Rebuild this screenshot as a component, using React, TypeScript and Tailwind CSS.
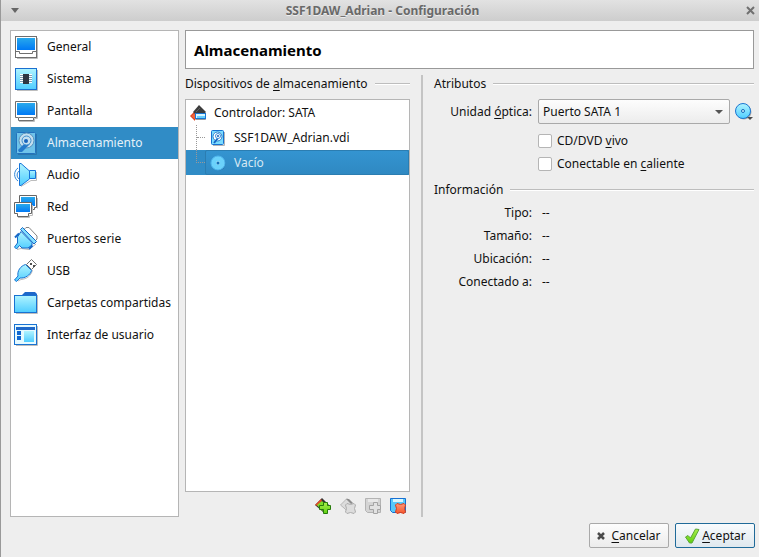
import type { ReactNode } from "react";

function Svg({ size = 24, children }: { size?: 16 | 18 | 24; children: ReactNode }) {
  return (
    <svg width={size} height={size} viewBox={`0 0 ${size} ${size}`} className="shrink-0" aria-hidden="true">
      {children}
    </svg>
  );
}

function Gradients() {
  return (
    <svg width="0" height="0" className="absolute" aria-hidden="true">
      <defs>
        <linearGradient id="screen" x1="0" y1="0" x2="0" y2="1">
          <stop offset="0" stopColor="#28a9ec" />
          <stop offset="1" stopColor="#0079f5" />
        </linearGradient>
        <linearGradient id="sky" x1="0" y1="0" x2="0" y2="1">
          <stop offset="0" stopColor="#b0f4ff" />
          <stop offset="1" stopColor="#4fcdff" />
        </linearGradient>
        <linearGradient id="green" x1="0" y1="0" x2="0" y2="1">
          <stop offset="0" stopColor="#a8ee4c" />
          <stop offset="1" stopColor="#5fd010" />
        </linearGradient>
        <linearGradient id="red" x1="0" y1="0" x2="0" y2="1">
          <stop offset="0" stopColor="#ff9a78" />
          <stop offset="1" stopColor="#f4552c" />
        </linearGradient>
      </defs>
    </svg>
  );
}

function GeneralIcon() {
  return (
    <Svg>
      <path d="M3 23.5H23.5V3" fill="none" stroke="#bdbdbd" />
      <rect x="1.5" y="1.5" width="21" height="21" fill="#fff" stroke="#6f6f6f" />
      <rect x="3" y="3" width="18" height="12" fill="url(#screen)" />
      <path d="M2 16.5H5.5V18.5H18.5V16.5H22" fill="none" stroke="#6f6f6f" />
    </Svg>
  );
}

function SystemIcon() {
  return (
    <Svg>
      <path d="M3 23.5H23.5V3" fill="none" stroke="#bdbdbd" />
      <rect x="1.5" y="1.5" width="21" height="21" fill="url(#sky)" stroke="#1b6fd0" />
      <path d="M6 7.5H18M6 9.5H18M6 11.5H18M6 13.5H18M6 15.5H18" stroke="#fff" />
      <path d="M6 8.5H18M6 10.5H18M6 12.5H18M6 14.5H18" stroke="#7d9db4" />
      <rect x="9" y="7" width="6" height="10" fill="#2f3542" />
    </Svg>
  );
}

function DisplayIcon() {
  return (
    <Svg>
      <path d="M5 22.5H20.5V19.5H23.5V4" fill="none" stroke="#bdbdbd" />
      <path d="M1.5 2.5H22.5V18.5H19.5V21.5H4.5V18.5H1.5Z" fill="#fff" stroke="#6f6f6f" />
      <rect x="3" y="4" width="18" height="12" fill="url(#screen)" />
      <path d="M5 18.5H19" stroke="#6f6f6f" />
    </Svg>
  );
}

function StorageIcon() {
  return (
    <Svg>
      <path d="M4 23.5H22.5V3" fill="none" stroke="#2a77ae" />
      <rect x="2.5" y="1.5" width="19" height="21" rx="1" fill="#6ec3ea" stroke="#2272bd" />
      <circle cx="12.5" cy="9.500" r="7.500" fill="#c4dfef" stroke="#5793bd" />
      <path d="M12 11L8 15L4 19L5 21H8L13 16L16 13Z" fill="#2379cb" />
      <circle cx="12.500" cy="9.500" r="4.500" fill="#c4dfef" stroke="#3f8dcb" />
      <circle cx="12" cy="10" r="2" fill="#1764bd" />
    </Svg>
  );
}

function AudioIcon() {
  return (
    <Svg>
      <path d="M7 23.5L17 17.5H22.5V9" fill="none" stroke="#bdbdbd" />
      <path d="M5.5 0.5H7L15.5 8V16L7 22.5H5.5Z" fill="url(#sky)" stroke="#1674d8" />
      <path d="M15.5 7.5H21.5V15.5H15.5Z" fill="url(#sky)" stroke="#1674d8" />
      <path d="M4 5C-0.5 8 -0.5 15 4 18M5 8C2.5 10 2.5 14 5 16" fill="none" stroke="#2d86d8" />
    </Svg>
  );
}

function NetworkIcon() {
  return (
    <Svg>
      <path d="M5.5 0.5H22.5V12.5H20.5V14.5H8.5V12.5H5.5Z" fill="#fff" stroke="#666" />
      <rect x="7" y="2" width="14" height="9" fill="url(#screen)" />
      <path d="M4 22.5H15.5V20.5H18.5V10M23.5 3V13.5" fill="none" stroke="#bdbdbd" />
      <path d="M0.5 7.5H17.5V18.5H14.5V21.5H3.5V18.5H0.5Z" fill="#fff" stroke="#666" />
      <rect x="2" y="9" width="14" height="8" fill="url(#screen)" />
    </Svg>
  );
}

function SerialIcon() {
  return (
    <Svg>
      <path d="M10 2.5L12 0.5H15L23 9V12L20 15Z" fill="#fff" stroke="#858585" />
      <path d="M3 22.5L7 21.5L15 22.5L22 17" fill="none" stroke="#b5b5b5" />
      <path d="M7 4.500L18 15.500V18L14 21H8L5.500 18.500L2.500 22L0.500 20L3.500 16V10Z" fill="url(#sky)" stroke="#1769c8" />
      <path d="M6.5 2.5L8.5 0.5L22.5 14.5L20 17Z" fill="#85dfff" stroke="#1769c8" />
      <path d="M1 10.5L5 6.500M15 22L18.5 18.5" stroke="#1769c8" strokeWidth="2" />
    </Svg>
  );
}

function UsbIcon() {
  return (
    <Svg>
      <path d="M12.5 5.5L17.5 0.5L22.5 5.5L17.5 10.5Z" fill="#fff" stroke="#707070" />
      <path d="M16 4H18V6H16ZM19 6H21V8H19Z" fill="#4f4f4f" />
      <path d="M4 22L7 20.5C13 20 17 17 18.5 11" fill="none" stroke="#bdbdbd" />
      <path d="M11.5 5.5L17.5 11.5C16.5 16 11 19.5 6 19L2.5 22.5L0.5 21L4 17C3 12 6.5 7 11.5 5.5Z" fill="url(#sky)" stroke="#1872d2" />
    </Svg>
  );
}

function FolderIcon() {
  return (
    <Svg>
      <path d="M8 5V4L11 1H21L23 3V6H8Z" fill="#1e68c9" />
      <path d="M2 22.5H23.5V4" fill="none" stroke="#bdbdbd" />
      <rect x="0.5" y="4.5" width="22" height="17" fill="url(#sky)" stroke="#1872d2" />
    </Svg>
  );
}

function InterfaceIcon() {
  return (
    <Svg>
      <path d="M2 22.5H23.5V3" fill="none" stroke="#bdbdbd" />
      <rect x="0.5" y="1.5" width="22" height="20" fill="#e5faff" stroke="#1872d2" />
      <rect x="2" y="4" width="19" height="3" fill="#1e68c9" />
      <path d="M3 8H7V12H3ZM3 13H7V17H3Z" fill="#0e67d2" />
      <rect x="10" y="8" width="10" height="11" fill="url(#sky)" />
    </Svg>
  );
}

function ControllerIcon() {
  return (
    <Svg size={16}>
      <path d="M0 11L5 6V16Z" fill="#d9401f" />
      <path d="M1 11L6 7V15Z" fill="#f0643c" />
      <path d="M3 7L9 0L16 7L14 9H5Z" fill="#3c3c3c" />
      <path d="M6 7L10 3" stroke="#626262" />
      <path d="M6 14.5H15.5V9" fill="none" stroke="#999" />
      <rect x="5.5" y="8.5" width="10" height="5" fill="#d9f6ff" stroke="#1976d2" />
      <rect x="7" y="11" width="8" height="2" fill="#65cfff" />
    </Svg>
  );
}

function HardDiskIcon() {
  return (
    <Svg size={16}>
      <path d="M3 15.5H14.5V2" fill="none" stroke="#b5b5b5" />
      <rect x="1.5" y="0.5" width="12" height="14" rx="1" fill="#7bdcff" stroke="#1672d2" />
      <circle cx="7.5" cy="6.5" r="4.500" fill="#fff" stroke="#2d7ec9" />
      <path d="M8 8L4 13" stroke="#1765c4" strokeWidth="2" />
      <circle cx="8" cy="6" r="2.500" fill="#fff" stroke="#3c8fdc" />
      <circle cx="8" cy="6" r="1" fill="#125bb5" />
    </Svg>
  );
}

function DiscIcon() {
  return (
    <Svg size={16}>
      <circle cx="8.5" cy="8.5" r="7" fill="#2267a1" />
      <circle cx="8" cy="8" r="7" fill="#6bd2fb" stroke="#4fb6ee" />
      <circle cx="8" cy="8" r="2" fill="#a7e4fa" />
      <circle cx="8" cy="8" r="1.5" fill="#1770b8" />
    </Svg>
  );
}

function DiscMenuIcon() {
  return (
    <Svg size={18}>
      <circle cx="9" cy="9" r="7.5" fill="#aaa" />
      <circle cx="8" cy="8" r="7.5" fill="url(#sky)" stroke="#1b75d0" />
      <circle cx="8" cy="8" r="1.5" fill="#d7f7ff" stroke="#1769b7" />
      <path d="M12 14H18L15 17Z" fill="#4a4a4a" />
    </Svg>
  );
}

const PLUS = "M8.5 4.5H12.5V7.5H15.5V11.5H12.5V15.5H8.5V11.5H4.5V7.5H8.5Z";
const CROSS = "M7 5.5L10.5 6.5L14 5.5L15.5 7L14.5 10.5L15.5 14L14 15.5L10.5 14.5L7 15.5L5.5 14L6.5 10.5L5.5 7Z";

function AddControllerIcon() {
  return (
    <Svg size={16}>
      <path d="M0 7L7 0L15 8L8 14Z" fill="#333" />
      <path d="M0 7L6 1L7 3L3 8Z" fill="#e44b24" />
      <path d="M2 7L7 3L12 8L7 13Z" fill="#7fdc2a" />
      <path d={PLUS} fill="url(#green)" stroke="#267b0b" />
    </Svg>
  );
}

function RemoveControllerIcon() {
  return (
    <Svg size={16}>
      <path d="M0.5 7L7 0.5L14.5 8L8 13.5Z" fill="#dcdcdc" stroke="#b5b5b5" />
      <path d="M6 1H9L13 5L11 6Z" fill="#8c8c8c" />
      <path d={CROSS} fill="#ddd" stroke="#acacac" />
    </Svg>
  );
}

function AddDiskIcon() {
  return (
    <Svg size={16}>
      <path d="M0.5 0.5H15.5V14.5H2.5L0.5 12.5Z" fill="#d4d4d4" stroke="#b3b3b3" />
      <path d="M3 1H13V4H3Z" fill="#e8e8e8" />
      <path d={PLUS} fill="#e2e2e2" stroke="#a4a4a4" />
    </Svg>
  );
}

function RemoveDiskIcon() {
  return (
    <Svg size={16}>
      <path d="M0.5 0.5H15.5V14.5H2.5L0.5 12.5Z" fill="#58c9fa" stroke="#176fd2" />
      <path d="M3 1H13V4H3Z" fill="#d9f6ff" />
      <path d={CROSS} fill="url(#red)" stroke="#d93d1c" />
    </Svg>
  );
}

const categories = [
  { label: "General", Icon: GeneralIcon },
  { label: "Sistema", Icon: SystemIcon },
  { label: "Pantalla", Icon: DisplayIcon },
  { label: "Almacenamiento", Icon: StorageIcon },
  { label: "Audio", Icon: AudioIcon },
  { label: "Red", Icon: NetworkIcon },
  { label: "Puertos serie", Icon: SerialIcon },
  { label: "USB", Icon: UsbIcon },
  { label: "Carpetas compartidas", Icon: FolderIcon },
  { label: "Interfaz de usuario", Icon: InterfaceIcon },
];

const tools = [
  { label: "Agregar controlador", Icon: AddControllerIcon, disabled: false },
  { label: "Eliminar controlador", Icon: RemoveControllerIcon, disabled: true },
  { label: "Agregar dispositivo", Icon: AddDiskIcon, disabled: true },
  { label: "Eliminar dispositivo", Icon: RemoveDiskIcon, disabled: false },
];

const details = ["Tipo:", "Tamaño:", "Ubicación:", "Conectado a:"];

function Key({ children }: { children: string }) {
  return <span className="underline decoration-1 underline-offset-2">{children}</span>;
}

function SectionTitle({ children }: { children: ReactNode }) {
  return (
    <h2 className="flex items-center gap-[7px]">
      {children}
      <span className="h-[2px] flex-1 border-t border-[#bdbdbd] bg-white" />
    </h2>
  );
}

function TitleBar() {
  return (
    <header className="flex h-[21px] items-center justify-between bg-linear-to-b from-[#e2e2e2] to-[#cdcdcd] pr-[3px] pl-2 text-[#696969]">
      <button aria-label="Menú de la ventana" className="flex w-3 justify-center">
        <svg width="8" height="5" viewBox="0 0 8 5"><path d="M0 0H8L4 5Z" fill="#666" /></svg>
      </button>
      <h1 className="font-bold [text-shadow:0_1px_0_#eeeeee]">SSF1DAW_Adrian - Configuración</h1>
      <button aria-label="Cerrar" className="flex w-3 justify-center">
        <svg width="9" height="9" viewBox="0 0 9 9"><path d="M1 1L8 8M8 1L1 8" stroke="#707070" strokeWidth="2" /></svg>
      </button>
    </header>
  );
}

function CategoryList() {
  return (
    <nav className="w-[169px] shrink-0 border border-[#b5b5b5] bg-white">
      {categories.map(({ label, Icon }) => (
        <button
          key={label}
          className={
            label === "Almacenamiento"
              ? "flex h-8 w-full items-center gap-[9px] bg-[#308cc6] pl-[3px] text-left whitespace-nowrap text-[#e4f1f9]"
              : "flex h-8 w-full items-center gap-[9px] pl-[3px] text-left whitespace-nowrap"
          }
        >
          <Icon />
          {label}
        </button>
      ))}
    </nav>
  );
}

function DeviceTree() {
  return (
    <div role="tree" aria-label="Dispositivos de almacenamiento" className="flex-1 border border-[#b5b5b5] bg-white">
      <div role="treeitem" className="flex h-[25px] items-center gap-2 pl-1">
        <ControllerIcon />
        Controlador: SATA
      </div>
      <div role="treeitem" className="flex h-[25px] pl-[10px]">
        <span className="w-px border-l border-dotted border-[#999]" />
        <span className="h-[13px] w-2 border-b border-dotted border-[#999]" />
        <span className="flex items-center gap-2 pl-[5px]">
          <HardDiskIcon />
          SSF1DAW_Adrian.vdi
        </span>
      </div>
      <div role="treeitem" aria-selected="true" className="flex h-[25px] bg-[#308cc6] pl-[10px] text-[#d6e8f3]">
        <span className="h-[13px] w-[9px] border-b border-l border-dotted border-[#999]" />
        <span className="flex flex-1 items-center gap-2 rounded-xs border border-[#2b7db1] bg-linear-to-b from-[#3494d1] to-[#2f89c2] pl-1">
          <DiscIcon />
          Vacío
        </span>
      </div>
    </div>
  );
}

function Devices() {
  return (
    <section className="flex w-[225px] shrink-0 flex-col gap-[6px]">
      <SectionTitle>
        <span className="whitespace-nowrap">Dispositivos de <Key>a</Key>lmacenamiento</span>
      </SectionTitle>
      <DeviceTree />
      <div className="flex h-[19px] items-start justify-end gap-[9px] pr-1">
        {tools.map(({ label, Icon, disabled }) => (
          <button key={label} aria-label={label} disabled={disabled}>
            <Icon />
          </button>
        ))}
      </div>
    </section>
  );
}

function Check({ id, children }: { id: string; children: ReactNode }) {
  return (
    <div className="col-start-2 flex items-center gap-[5px]">
      <input id={id} type="checkbox" className="size-[14px] appearance-none rounded-xs border border-[#b5b5b5] bg-white checked:bg-[#308cc6]" />
      <label htmlFor={id}>{children}</label>
    </div>
  );
}

function Attributes() {
  return (
    <section className="flex min-w-0 flex-1 flex-col">
      <SectionTitle>Atributos</SectionTitle>
      <div className="mt-[6px] grid grid-cols-[98px_1fr] gap-x-[6px] gap-y-[5px]">
        <label htmlFor="drive" className="mb-[3px] self-center text-right">Unidad <Key>ó</Key>ptica:</label>
        <div className="mb-[3px] flex items-center gap-[5px] pr-px">
          <div className="relative flex-1">
            <select id="drive" className="block h-[25px] w-full appearance-none rounded-xs border border-[#a9a9a9] bg-linear-to-b from-[#fdfdfd] to-[#ececec] pl-1">
              <option>Puerto SATA 1</option>
            </select>
            <svg width="8" height="4" viewBox="0 0 8 4" className="pointer-events-none absolute top-[11px] right-[7px]">
              <path d="M0 0H8L4 4Z" fill="#555" />
            </svg>
          </div>
          <button aria-label="Elegir disco óptico"><DiscMenuIcon /></button>
        </div>
        <Check id="live">CD/DVD <Key>v</Key>ivo</Check>
        <Check id="hotplug">Conectable en <Key>c</Key>aliente</Check>
      </div>
      <div className="mt-2">
        <SectionTitle>Información</SectionTitle>
      </div>
      <dl className="mt-[5px] grid grid-cols-[98px_1fr] gap-x-[10px] gap-y-[5px]">
        {details.map((name) => (
          <div key={name} className="contents">
            <dt className="text-right">{name}</dt>
            <dd>--</dd>
          </div>
        ))}
      </dl>
    </section>
  );
}

export default function App() {
  return (
    <div className="flex min-h-screen flex-col border-l border-[#999] bg-[#eeeeee] font-['Noto_Sans','Open_Sans',sans-serif] text-[12px] leading-[18px] text-[#111]">
      <Gradients />
      <TitleBar />
      <main className="flex flex-1 gap-[6px] pt-[9px] pr-[5px] pl-[9px]">
        <CategoryList />
        <div className="flex min-w-0 flex-1 flex-col gap-[6px]">
          <div className="flex h-[39px] items-center border border-[#999] bg-white px-2">
            <h2 className="text-[15px] font-bold text-black">Almacenamiento</h2>
          </div>
          <div className="flex flex-1">
            <Devices />
            <div className="mr-[11px] ml-[11px] w-[2px] bg-[#c4c4c4]" />
            <Attributes />
          </div>
        </div>
      </main>
      <footer className="flex justify-end gap-[6px] pt-[6px] pr-[4px] pb-[9px]">
        <button className="flex h-[25px] w-20 items-center justify-center gap-[6px] rounded-xs border border-[#a9a9a9] bg-linear-to-b from-[#fdfdfd] to-[#ececec]">
          <svg width="8" height="8" viewBox="0 0 8 8" aria-hidden="true"><path d="M1 1L7 7M7 1L1 7" stroke="#4a4a4a" strokeWidth="2.5" /></svg>
          <span><Key>C</Key>ancelar</span>
        </button>
        <button className="flex h-[25px] w-20 items-center justify-center gap-[2px] rounded-xs border border-[#1f6a99] bg-linear-to-b from-[#f8fbfd] to-[#dfe8ee]">
          <Svg size={16}>
            <path d="M1.5 9L4 7.5L6.5 10L11.5 1L15 1.5L8 15H5.5Z" fill="url(#green)" stroke="#5aa53a" />
          </Svg>
          <span><Key>A</Key>ceptar</span>
        </button>
      </footer>
    </div>
  );
}
